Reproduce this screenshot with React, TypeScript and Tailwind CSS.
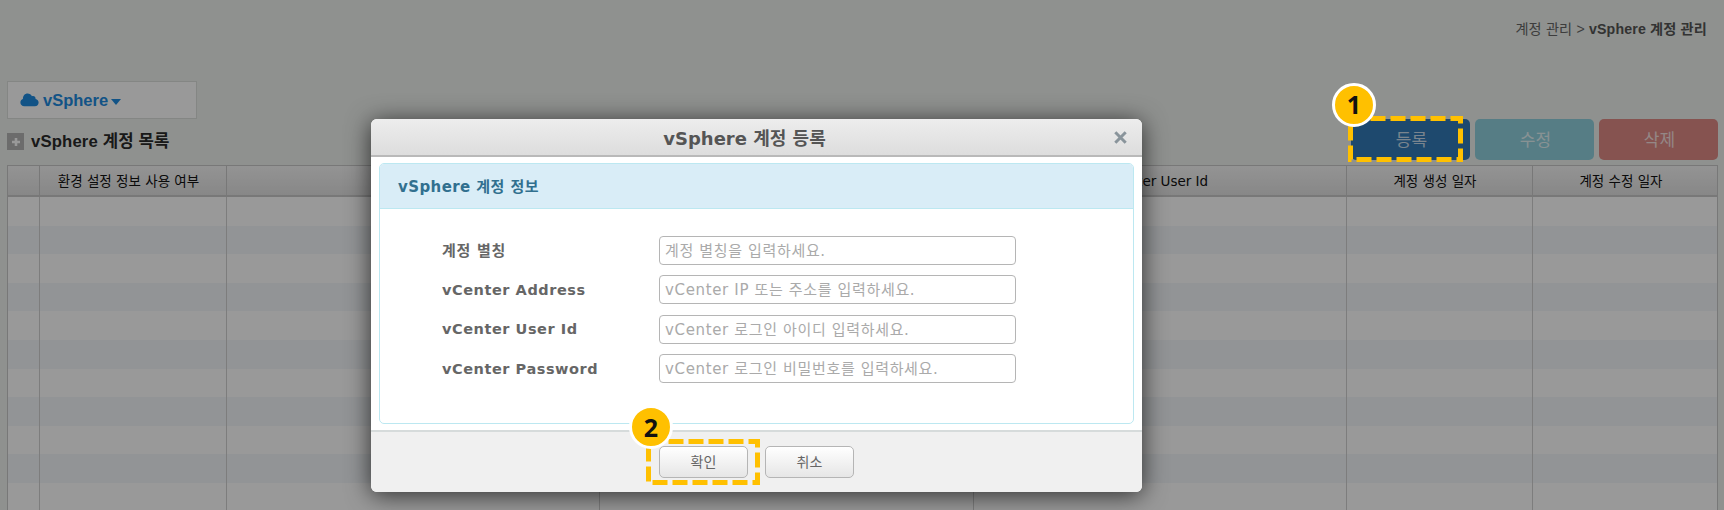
import type { ReactNode } from "react";

const fields = [
  { label: "계정 별칭", hint: "계정 별칭을 입력하세요.", spacing: "text-[15px] tracking-[0.7px]" },
  { label: "vCenter Address", hint: "vCenter IP 또는 주소를 입력하세요.", spacing: "text-[14.5px] tracking-[0.55px]" },
  { label: "vCenter User Id", hint: "vCenter 로그인 아이디 입력하세요.", spacing: "text-[14.5px] tracking-[0.55px]" },
  { label: "vCenter Password", hint: "vCenter 로그인 비밀번호를 입력하세요.", spacing: "text-[14.5px] tracking-[0.55px]" },
];

const columns = [
  { title: "", width: "w-[32px]" },
  { title: "환경 설정 정보 사용 여부", width: "w-[187px]" },
  { title: "", width: "w-[373px]" },
  { title: "", width: "w-[374px]" },
  { title: "vCenter User Id", width: "w-[373px]" },
  { title: "계정 생성 일자", width: "w-[186px]" },
  { title: "계정 수정 일자", width: "w-[185px]" },
];

function Action({ color, children }: { color: string; children: ReactNode }) {
  return (
    <button className={`h-[41px] w-[119px] rounded-[5px] pt-[2px] pl-[2px] text-[17px] text-white/75 ${color}`}>{children}</button>
  );
}

function Callout({ width, height, className }: { width: number; height: number; className: string }) {
  return (
    <div className={`pointer-events-none absolute ${className}`}>
      <svg width={width + 5} height={height + 5} className="block">
        <rect x="2.5" y="2.5" width={width} height={height} fill="none" stroke="#ffc000" strokeWidth="5" strokeDasharray="15 5" />
      </svg>
    </div>
  );
}

function Badge({ n, className }: { n: number; className: string }) {
  return (
    <div
      className={`absolute flex size-[44px] items-center justify-center rounded-full border-[3px] border-white bg-[#ffc000] font-['Noto_Sans',sans-serif] text-[25px] font-bold text-[#111] ${className}`}
    >
      {n}
    </div>
  );
}

function DialogButton({ children }: { children: ReactNode }) {
  return (
    <button className="h-8 w-[89px] rounded-[5px] border border-[#b5b5b5] bg-linear-to-b from-white to-[#e6e6e6] pt-px text-[14px] text-[#666]">
      {children}
    </button>
  );
}

export default function App() {
  return (
    <div className="relative h-[510px] w-[1724px] overflow-hidden bg-[#eef2ee] font-['Liberation_Sans','Noto_Sans_CJK_KR',sans-serif]">
      <div className="flex h-[81px] justify-end pt-[19px] pr-[17px] text-[14.2px] leading-[21px] tracking-[0.15px] text-[#666]">
        <p>
          계정 관리 &gt; <b className="text-[#555]">vSphere 계정 관리</b>
        </p>
      </div>

      <div className="relative flex h-[84px] justify-between pr-[6px] pl-[7px]">
        <div>
          <div className="flex h-[38px] w-[190px] items-center border border-[#dcdfdc] bg-white pl-3 text-[16.5px] font-bold text-[#1e8be0]">
            <svg width="19" height="14" viewBox="0 0 19 14" className="mr-[4px]" fill="currentColor">
              <path d="M4.4 13.2C1.8 13.2.4 11.5.4 9.5c0-1.7 1-3 2.5-3.5C2.9 2.8 4.9.6 7.6.6c2 0 3.5 1.1 4.3 2.7 1.9-.8 3.9.5 3.7 2.7 1.8.3 3 1.7 3 3.5 0 2.1-1.5 3.7-3.7 3.7z" />
            </svg>
            vSphere
            <svg width="10" height="6" viewBox="0 0 10 6" className="mt-[3px] ml-[3px]" fill="currentColor">
              <path d="M0 0h10L5 6z" />
            </svg>
          </div>
          <div className="flex h-[44px] items-center pt-px">
            <span className="flex size-[17px] items-center justify-center bg-[#b4b4b4]">
              <svg width="8" height="8" viewBox="0 0 8 8" fill="#fff">
                <path d="M2.7 0h2.6v2.7H8v2.6H5.3V8H2.7V5.3H0V2.7h2.7z" />
              </svg>
            </span>
            <h1 className="ml-[7px] text-[16.7px] font-bold tracking-[0.15px] text-[#2a2a2a]">vSphere 계정 목록</h1>
          </div>
        </div>
        <div className="flex gap-[5px] pt-[38px]">
          <Action color="bg-[#337ab7]">등록</Action>
          <Action color="bg-[#90d1de]">수정</Action>
          <Action color="bg-[#df8a86]">삭제</Action>
        </div>
      </div>

      <div className="ml-[7px] flex h-[346px] w-[1711px] flex-col border-t border-r border-l border-[#c9c9c9] font-['DejaVu_Sans','Noto_Sans_CJK_KR',sans-serif]">
        <div className="flex h-[31px] shrink-0 border-b-2 border-[#c9c9c9] bg-linear-to-b from-[#f6f6f6] to-[#e2e2e2] text-[13.5px] text-[#111]">
          {columns.map((c, i) => (
            <div key={i} className={`flex shrink-0 items-center justify-center border-r border-[#c9c9c9] pt-px last:border-r-0 ${c.title ? "pr-[9px]" : ""} ${c.width}`}>
              {c.title}
            </div>
          ))}
        </div>
        <div className="flex grow bg-[repeating-linear-gradient(to_bottom,#fff_0px,#fff_28.6px,#f4f7fa_28.6px,#f4f7fa_57.2px)]">
          {columns.map((c, i) => (
            <div key={i} className={`shrink-0 border-r border-[#d0d0d0] last:border-r-0 ${c.width}`} />
          ))}
        </div>
      </div>

      <div className="absolute inset-0 bg-black/40 pt-[119px] pl-[371px]">
        <section className="flex h-[373px] w-[771px] flex-col overflow-hidden rounded-[6px] bg-white font-['DejaVu_Sans','Noto_Sans_CJK_KR',sans-serif] shadow-[0_3px_25px_rgba(0,0,0,0.7)]">
          <header className="relative flex h-[38px] shrink-0 items-center justify-center border-b-2 border-[#b9b9b9] bg-linear-to-b from-[#ededed] to-[#dddddd] pt-[2px] pr-6">
            <h2 className="text-[18px] font-bold text-[#555]">vSphere 계정 등록</h2>
            <svg width="13" height="13" viewBox="0 0 13 13" className="absolute top-[12px] right-[15px]" stroke="#89949b" strokeWidth="3" fill="none">
              <path d="M1.3 1.3l10.4 10.4M11.7 1.3L1.3 11.7" />
            </svg>
          </header>
          <div className="grow px-[8px] pt-[6px]">
            <div className="h-[261px] overflow-hidden rounded-[5px] border border-[#bce8f1]">
              <h3 className="flex h-[45px] items-center border-b border-[#bce8f1] bg-[#d9edf7] pt-[2px] pl-[18px] text-[15px] font-bold tracking-[0.42px] text-[#31708f]">
                vSphere 계정 정보
              </h3>
              <div className="flex flex-col gap-[10.4px] pt-[27px] pl-[62px]">
                {fields.map((f) => (
                  <div key={f.label} className="flex h-[29px] items-center">
                    <label className={`w-[217px] pt-[2px] font-bold text-[#666] ${f.spacing}`}>{f.label}</label>
                    <input
                      placeholder={f.hint}
                      className="h-[29px] w-[357px] rounded-[4px] border border-[#b5b5b5] px-[5px] pt-px text-[15px] tracking-[0.65px] placeholder:text-[#aaa]"
                    />
                  </div>
                ))}
              </div>
            </div>
          </div>
          <footer className="flex h-[62px] shrink-0 gap-[17px] border-t-2 border-[#d6dbdb] bg-[#f0f0f0] pt-[14px] pl-[288px]">
            <DialogButton>확인</DialogButton>
            <DialogButton>취소</DialogButton>
          </footer>
        </section>
      </div>

      <Callout width={110} height={41} className="top-[116px] left-[1348px]" />
      <Badge n={1} className="top-[83px] left-[1332px]" />
      <Callout width={109} height={41} className="top-[439px] left-[646px]" />
      <Badge n={2} className="top-[405px] left-[629px] pt-px" />
    </div>
  );
}
